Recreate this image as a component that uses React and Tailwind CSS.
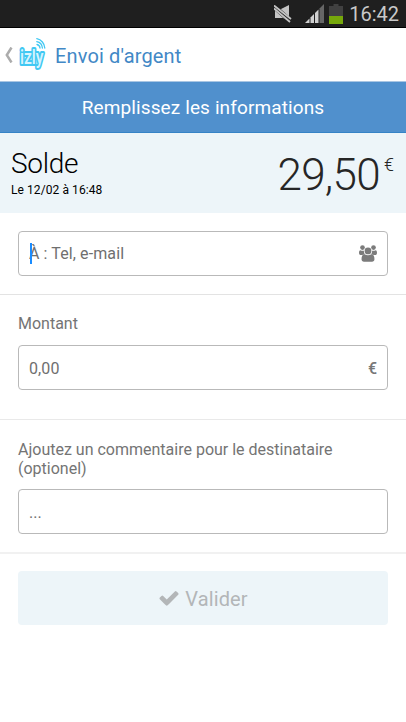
import React, { useState } from 'react';

const MutedIcon = () => (
  <svg className="w-[18px] h-[18px]" viewBox="0 0 18 18">
    <path d="M1 5h4l10-5v16L9 13H1z" fill="#c4c4c4" />
    <path d="M0 1.5l17 15" stroke="#1f1f1f" strokeWidth="5" />
    <path d="M0 .5l17 13.5M0 3.5l16 13.5" stroke="#c4c4c4" strokeWidth="1.8" />
  </svg>
);

const SignalIcon = () => (
  <svg className="w-[19px] h-[19px]" viewBox="0 0 19 19">
    <path d="M0 19L4.5 14.5V19z" fill="#d0d0d0" />
    <path d="M5.5 13.5L9 10v9H5.5z" fill="#d0d0d0" />
    <path d="M10 9l3.500-3.500V19H10z" fill="#d0d0d0" />
    <path d="M14.500 4.500L19 0v19h-4.500z" fill="#666" />
  </svg>
);

const BatteryIcon = () => (
  <svg className="w-[14px] h-5" viewBox="0 0 14 20">
    <path d="M4.500 0h5v2H14v18H0V2h4.500z" fill="#414141" />
    <path d="M0 12h14v8H0z" fill="#76a80b" />
  </svg>
);

const IzlyLogo = () => (
  <svg className="w-7 h-9 overflow-visible" viewBox="0 0 28 36">
    <text
      x="2"
      y="27"
      fontFamily="Roboto, sans-serif"
      fontSize="20"
      fontWeight="500"
      textLength="23.500"
      lengthAdjust="spacingAndGlyphs"
      fill="#d8f4fe"
      stroke="#41c8f3"
      strokeWidth="4"
      strokeLinejoin="round"
      paintOrder="stroke"
    >
      izly
    </text>
    <g fill="none" stroke="#41c8f3" strokeWidth="1.300" strokeLinecap="round">
      <path d="M19 7.500a4 4 0 0 1 3 3.500" />
      <path d="M18.800 4.600a7 7 0 0 1 5.600 6.400" />
      <path d="M18.800 1.700a10 10 0 0 1 8 9.300" />
    </g>
  </svg>
);

const UsersIcon = () => (
  <svg className="w-[18px] h-[17px]" viewBox="0 0 17 16" fill="#7b7b7b">
    <circle cx="3.300" cy="2.400" r="2.200" />
    <circle cx="13.700" cy="2.400" r="2.200" />
    <path d="M0 7.300C0 5.600.6 4.900 1.400 4.900c.8.600 2.200.8 3.300.4C4.500 6.700 4.800 7.600 5.600 8.600c-1 0-1.900.3-2.500.9H1.700C.7 9.500 0 8.700 0 7.300zM17 7.300c0-1.700-.6-2.400-1.400-2.400-.8.600-2.200.8-3.300.4.2 1.400-.1 2.300-.9 3.300 1 0 1.900.3 2.500.9h1.400c1 0 1.700-.8 1.700-2.200z" />
    <circle cx="8.500" cy="5.600" r="3.200" />
    <path d="M5.300 8.700c1.900 1.400 4.500 1.400 6.400 0 2.200 0 2.900 1.900 2.900 4.700 0 1.500-.9 2.400-2.300 2.400H4.700c-1.400 0-2.300-.9-2.300-2.400 0-2.800.7-4.700 2.900-4.700z" />
  </svg>
);

const CheckIcon = () => (
  <svg className="w-[22px] h-[22px]" viewBox="0 0 1792 1792" fill="#b3b6b8">
    <path d="M1671 566q0 40-28 68l-724 724-136 136q-28 28-68 28t-68-28l-136-136-362-362q-28-28-28-68t28-68l136-136q28-28 68-28t68 28l294 295 656-657q28-28 68-28t68 28l136 136q28 28 28 68z" />
  </svg>
);

function Field({ value, onChange, placeholder, children, inputClass = '' }) {
  return (
    <div className="relative flex h-[45px] items-center rounded-[4px] border border-[#b9b9b9] bg-white px-[10px]">
      <input
        type="text"
        value={value}
        onChange={(e) => onChange(e.target.value)}
        placeholder={placeholder}
        className={`min-w-0 flex-1 bg-transparent text-base text-[#6f6f6f] outline-none placeholder:text-[#6f6f6f] ${inputClass}`}
      />
      {children}
    </div>
  );
}

export default function App() {
  const [recipient, setRecipient] = useState('');
  const [amount, setAmount] = useState('');
  const [comment, setComment] = useState('');

  return (
    <div className="flex h-[722px] w-[406px] flex-col overflow-hidden bg-white font-[Roboto,sans-serif]">
      <div className="flex h-7 shrink-0 items-center justify-end border-b border-black bg-[#1f1f1f] pr-[7px]">
        <MutedIcon />
        <div className="ml-[13px] flex items-center">
          <SignalIcon />
        </div>
        <div className="ml-[5px]">
          <BatteryIcon />
        </div>
        <span className="ml-[6px] text-[20px] leading-none text-[#c9c9c9]">16:42</span>
      </div>

      <header className="flex h-[54px] shrink-0 items-center border-b border-[#a9c6e3] pl-[5px]">
        <svg className="h-4 w-2" viewBox="0 0 8 16" fill="none" stroke="#acacac" strokeWidth="2.500">
          <path d="M6.500 0.500L1.800 8l4.700 7.500" />
        </svg>
        <div className="ml-[5px]">
          <IzlyLogo />
        </div>
        <h1 className="ml-[9px] pt-[2px] text-[20px] leading-7 tracking-[0.15px] text-[#4288c6]">
          Envoi d'argent
        </h1>
      </header>

      <div className="flex h-[51px] shrink-0 items-center justify-center border-b border-[#3583c6] bg-[#5090cd] pt-[2px] text-[19px] tracking-[0.12px] text-white">
        Remplissez les informations
      </div>

      <section className="flex h-20 shrink-0 justify-between bg-[#edf5f9] pl-[11px] pr-3">
        <div className="pt-[15px]">
          <div className="text-[28px] font-light leading-8 tracking-[-0.3px] text-black">Solde</div>
          <div className="mt-[2px] text-xs leading-4 tracking-[0.08px] text-black">Le 12/02 à 16:48</div>
        </div>
        <div className="flex items-start pt-[18px] font-light text-[#262626]">
          <span className="text-[44px] leading-[48px] tracking-[-0.7px]">29,50</span>
          <span className="ml-[4px] mt-[4px] text-[18px] leading-5">€</span>
        </div>
      </section>

      <form className="flex flex-col text-[#747474]" onSubmit={(e) => e.preventDefault()}>
        <div className="h-[82px] border-b border-[#e3e3e3] px-[18px] pt-[18px]">
          <Field
            value={recipient}
            onChange={setRecipient}
            placeholder="À : Tel, e-mail"
            inputClass="pt-px tracking-[0.1px]"
          >
            <span className="absolute left-[11px] top-[11px] h-[21px] w-[2px] bg-[#1a8cff]" />
            <UsersIcon />
          </Field>
        </div>

        <div className="h-[125px] border-b border-[#e9e9e9] px-[18px] pt-[19px]">
          <label className="mb-[11px] block text-base leading-5">Montant</label>
          <Field
            value={amount}
            onChange={setAmount}
            placeholder="0,00"
            inputClass="pt-[2px] tracking-[0.1px]"
          >
            <span className="pt-[2px] text-base font-medium text-[#777]">€</span>
          </Field>
        </div>

        <div className="h-[134px] border-b-2 border-[#f1f1f1] px-[18px] pt-5">
          <label className="mb-[11px] block text-base leading-[19px]">
            Ajoutez un commentaire pour le destinataire (optionel)
          </label>
          <Field value={comment} onChange={setComment} placeholder="..." inputClass="pt-[2px]" />
        </div>

        <div className="px-[18px] pt-[17px]">
          <button
            type="submit"
            disabled
            className="flex h-[54px] w-full items-center justify-center gap-[5px] rounded-[4px] bg-[#edf5f9] text-[20px] text-[#b3b6b8]"
          >
            <CheckIcon />
            <span className="pt-px tracking-[0.1px]">Valider</span>
          </button>
        </div>
      </form>
    </div>
  );
}
